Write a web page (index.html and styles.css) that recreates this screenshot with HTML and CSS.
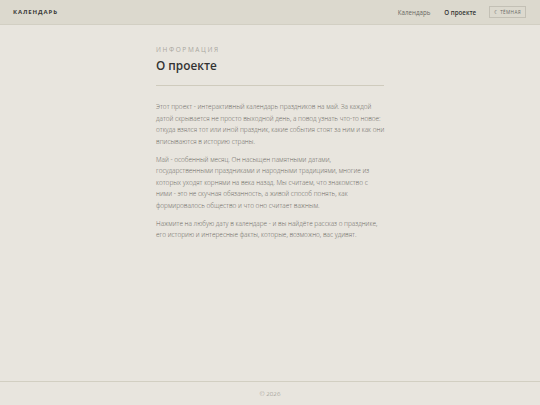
FILE: index.html
```html
<!DOCTYPE html>
<html lang="ru">
<head>
<meta charset="utf-8">
<title>О проекте</title>
<link rel="stylesheet" href="styles.css">
</head>
<body>
<div class="page">
  <header class="header">
    <div class="logo">КАЛЕНДАРЬ</div>
    <nav class="nav">
      <a class="nav-link">Календарь</a>
      <a class="nav-link active">О проекте</a>
      <button class="theme-btn">☾ ТЁМНАЯ</button>
    </nav>
  </header>
  <main class="main">
    <div class="content">
      <div class="eyebrow">ИНФОРМАЦИЯ</div>
      <h1 class="title">О проекте</h1>
      <hr class="divider">
      <p class="para">Этот проект - интерактивный календарь праздников на май. За каждой датой скрывается не просто выходной день, а повод узнать что-то новое: откуда взялся тот или иной праздник, какие события стоят за ним и как они вписываются в историю страны.</p>
      <p class="para">Май - особенный месяц. Он насыщен памятными датами, государственными праздниками и народными традициями, многие из которых уходят корнями на века назад. Мы считаем, что знакомство с ними - это не скучная обязанность, а живой способ понять, как формировалось общество и что оно считает важным.</p>
      <p class="para">Нажмите на любую дату в календаре - и вы найдёте рассказ о празднике, его историю и интересные факты, которые, возможно, вас удивят.</p>
    </div>
  </main>
  <footer class="footer">© 2026</footer>
</div>
</body>
</html>
```
FILE: styles.css
```css
html, body {
  margin: 0;
  padding: 0;
}
body {
  background: #e8e5de;
  font-family: "Open Sans", "Liberation Sans", sans-serif;
  color: #333;
}
.page {
  display: flex;
  flex-direction: column;
  min-height: 405px;
}
.header {
  height: 25px;
  background: #dcd9ce;
  border-bottom: 1px solid #d2cfc3;
  display: flex;
  align-items: center;
  justify-content: space-between;
  padding: 0 14px 0 13px;
  box-sizing: border-box;
}
.logo {
  font-size: 6px;
  font-weight: 700;
  letter-spacing: 0.9px;
  color: #3a3a38;
}
.nav {
  display: flex;
  align-items: center;
}
.nav-link {
  font-size: 6.2px;
  color: #6a6862;
  margin-right: 14px;
}
.nav-link.active {
  color: #333;
  font-weight: 600;
  margin-right: 13px;
}
.theme-btn {
  font-family: inherit;
  font-size: 4.6px;
  letter-spacing: 0.4px;
  color: #6a6965;
  background: transparent;
  border: 1px solid #c3c0b5;
  padding: 2px 4px;
  height: 12px;
  line-height: 6px;
  margin: 0;
}
.main {
  flex: 1;
  display: flex;
  justify-content: center;
}
.content {
  width: 228px;
  padding-top: 21px;
}
.eyebrow {
  font-size: 6.5px;
  letter-spacing: 1.6px;
  color: #a9a79f;
  line-height: 8px;
}
.title {
  margin: 3px 0 0 0;
  font-size: 11.8px;
  font-weight: 600;
  color: #333;
  line-height: 16px;
}
.divider {
  margin: 12px 0 15px 0;
  border: 0;
  border-top: 1px solid #cfcbbd;
  height: 0;
}
.para {
  margin: 0 -1px 6.5px 0;
  font-size: 6.45px;
  font-weight: 300;
  line-height: 11.5px;
  color: #6a6862;
}
.footer {
  height: 23px;
  border-top: 1px solid #d2cfc2;
  display: flex;
  align-items: center;
  justify-content: center;
  font-size: 6.2px;
  font-weight: 300;
  color: #8a8881;
}
```
